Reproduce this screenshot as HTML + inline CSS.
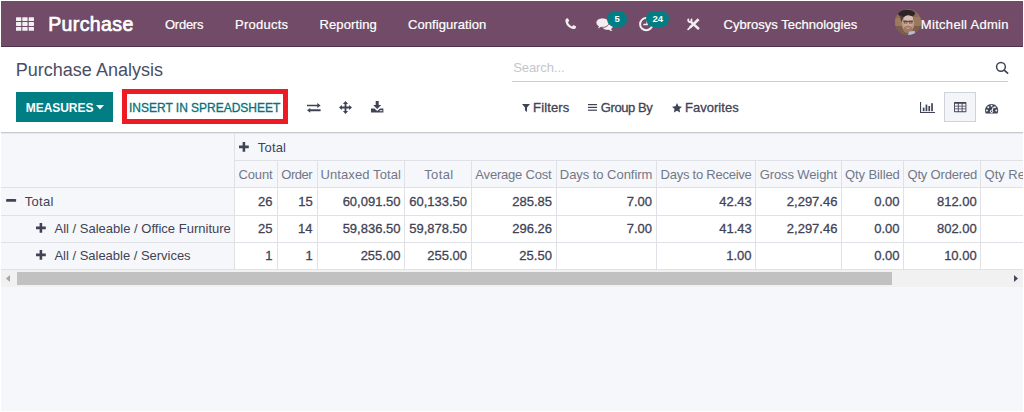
<!DOCTYPE html>
<html lang="en"><head><meta charset="utf-8"><title>Purchase Analysis - Odoo</title>
<style>
html,body{margin:0;padding:0}
body{width:1024px;height:412px;position:relative;overflow:hidden;background:#fff;font-family:"Liberation Sans",sans-serif;font-size:13px}
.a{position:absolute;display:block}
.t{position:absolute;white-space:pre;line-height:24px}
svg{position:absolute;overflow:visible}
.nav{left:1px;top:1px;width:1022px;height:45px;background:#714b67;border-bottom:1px solid #4f3148}
.bg{left:1px;top:133px;width:1022px;height:278px;background:#f6f7fa}
.cpline{left:1px;top:132px;width:1022px;height:1px;background:#c8cad2;box-shadow:0 1px 0 #e7e8ed}
.cells{left:235px;top:188px;width:788px;height:81px;background:#fff}
.hl{height:1px;background:#dfe1e7}
.vl{width:1px;background:#dfe1e7}
.badge{background:#017e84;border-radius:8px}
.btn{left:16px;top:92px;width:97px;height:30px;background:#017e84}
.red{left:122px;top:89px;width:156px;height:25px;border:5px solid #ed1c24}
.sline{left:512px;top:81px;width:496px;height:1px;background:#c9ccd3}
.vbtn{left:944px;top:92px;width:30px;height:28px;border:1px solid #cfd2d9;background:#f4f5f9}
.track{left:1px;top:270px;width:1022px;height:17px;background:#f1f1f2}
.thumb{left:17px;top:272px;width:875px;height:13px;background:#c1c1c1}
.edge{background:#fff}

</style></head>
<body>
<div class="a nav"></div>
<div class="a bg"></div>
<div class="a cpline"></div>
<div class="a cells"></div>
<!-- grid lines -->
<div class="a hl" style="left:234px;top:160px;width:789px"></div>
<div class="a hl" style="left:1px;top:187px;width:1022px"></div>
<div class="a hl" style="left:1px;top:215px;width:1022px"></div>
<div class="a hl" style="left:1px;top:242px;width:1022px"></div>
<div class="a hl" style="left:1px;top:269px;width:1022px"></div>
<div class="a vl" style="left:234px;top:133px;height:137px"></div>
<div class="a vl" style="left:277px;top:161px;height:109px"></div>
<div class="a vl" style="left:317px;top:161px;height:109px"></div>
<div class="a vl" style="left:404px;top:161px;height:109px"></div>
<div class="a vl" style="left:471px;top:161px;height:109px"></div>
<div class="a vl" style="left:556px;top:161px;height:109px"></div>
<div class="a vl" style="left:656px;top:161px;height:109px"></div>
<div class="a vl" style="left:755px;top:161px;height:109px"></div>
<div class="a vl" style="left:841px;top:161px;height:109px"></div>
<div class="a vl" style="left:903px;top:161px;height:109px"></div>
<div class="a vl" style="left:980px;top:161px;height:109px"></div>
<!-- scrollbar -->
<div class="a track"></div>
<div class="a thumb"></div>
<svg style="left:5px;top:274px" width="6" height="9" viewBox="0 0 6 9"><path d="M5 1 L5 8 L1 4.500 Z" fill="#a8a3a6"/></svg>
<svg style="left:1013px;top:274px" width="6" height="9" viewBox="0 0 6 9"><path d="M1 1 L1 8 L5 4.500 Z" fill="#45485a"/></svg>
<!-- control panel -->
<div class="a btn"></div>
<svg style="left:96px;top:105px" width="8" height="5" viewBox="0 0 8 5"><path d="M0 0 H8 L4 4.500 Z" fill="#fff"/></svg>
<div class="a red"></div>
<div class="a sline"></div>
<div class="a vbtn"></div>
<!-- navbar icons -->
<svg style="left:15.600px;top:17.200px" width="18" height="14" viewBox="0 0 18 13.700" fill="#f3eef2">
<rect x="0" y="0" width="5.300" height="3.900" rx=".6"/><rect x="6.300" y="0" width="5.300" height="3.900" rx=".6"/><rect x="12.700" y="0" width="5.300" height="3.900" rx=".6"/>
<rect x="0" y="4.900" width="5.300" height="3.900" rx=".6"/><rect x="6.300" y="4.900" width="5.300" height="3.900" rx=".6"/><rect x="12.700" y="4.900" width="5.300" height="3.900" rx=".6"/>
<rect x="0" y="9.800" width="5.300" height="3.900" rx=".6"/><rect x="6.300" y="9.800" width="5.300" height="3.900" rx=".6"/><rect x="12.700" y="9.800" width="5.300" height="3.900" rx=".6"/>
</svg>
<!-- phone -->
<svg style="left:564.800px;top:18px" width="11.400" height="11.400" viewBox="0 0 12 12"><path d="M2.600 .3 C1.500 .5 .3 1.500 .4 3 C.8 7.600 4.400 11.200 9 11.600 C10.500 11.700 11.500 10.500 11.700 9.400 L11.800 8.900 L8.800 7.500 L7.500 9 C5.500 8.200 3.800 6.500 3 4.500 L4.500 3.200 L3.100 .2 Z" fill="#f3eef2"/></svg>
<!-- comments -->
<svg style="left:596px;top:18px" width="17" height="13.500" viewBox="0 0 17 13.500">
<path d="M11.500 4.200 C14.500 4.200 16.900 5.900 16.900 8 C16.900 9.200 16.100 10.300 14.900 11 C15.200 11.900 15.800 12.600 16.600 13.100 C15.200 13.200 13.900 12.700 12.900 11.700 C12.400 11.800 12 11.800 11.500 11.800 C8.500 11.800 6.100 10.100 6.100 8 C6.100 5.900 8.500 4.200 11.500 4.200 Z" fill="#f3eef2"/>
<path d="M6.500 0 C10.100 0 13 2.100 13 4.700 C13 7.300 10.100 9.400 6.500 9.400 C5.900 9.400 5.400 9.350 4.900 9.250 C3.800 10.300 2.400 10.900 .8 10.900 C1.700 10.300 2.300 9.400 2.500 8.400 C1 7.500 0 6.200 0 4.700 C0 2.100 2.900 0 6.500 0 Z" fill="#f3eef2" stroke="#714b67" stroke-width=".9"/>
</svg>
<div class="a badge" style="left:607px;top:11px;width:20px;height:16px"></div>
<!-- clock -->
<svg style="left:639px;top:17.200px" width="14.400" height="14.400" viewBox="0 0 14.400 14.400"><circle cx="7.200" cy="7.200" r="6.100" fill="none" stroke="#f3eef2" stroke-width="2"/><path d="M8.100 3.300 V7.600 H4.300" fill="none" stroke="#f3eef2" stroke-width="1.500"/></svg>
<div class="a badge" style="left:646px;top:11px;width:23px;height:15.500px"></div>
<!-- tools -->
<svg style="left:686.600px;top:17.800px" width="12.600" height="12" viewBox="0 0 12.600 12" fill="none" stroke="#f3eef2">
<path d="M11.600 1.200 L2.900 9.600" stroke-width="2.600"/>
<path d="M3.400 9.100 L1.100 11.300" stroke-width="1.700" stroke-linecap="round"/>
<path d="M4.500 4.300 L11.300 10.500" stroke-width="2.400" stroke-linecap="round"/>
<path d="M3.950 .95 A1.700 1.700 0 1 1 1.850 .95" stroke-width="1.900"/>
</svg>
<!-- avatar -->
<svg style="left:894.800px;top:8.700px" width="26" height="26" viewBox="0 0 26 26">
<defs><clipPath id="av"><circle cx="13" cy="13" r="13"/></clipPath></defs>
<g clip-path="url(#av)">
<rect width="26" height="26" fill="#8d6c54"/>
<rect x="0" y="9" width="7" height="8" fill="#9c7a5e"/>
<rect x="19" y="8" width="7" height="9" fill="#9a7860"/>
<rect x="0" y="17" width="26" height="9" fill="#7c5e4a"/>
<ellipse cx="11.500" cy="4.600" rx="8.600" ry="3.900" fill="#2e2326"/>
<path d="M5.500 6 C4.800 9 5.800 12 7.300 13.500 L8 7.500 Z" fill="#4a3a38"/>
<ellipse cx="13" cy="14.800" rx="6.200" ry="8.600" fill="#bd9884"/>
<ellipse cx="13.500" cy="9.600" rx="4.600" ry="3.100" fill="#d6beb4"/>
<ellipse cx="13" cy="15.800" rx="4.400" ry="2.300" fill="#caa693"/>
<ellipse cx="13" cy="20.300" rx="4.600" ry="3.500" fill="#a07a66"/>
<path d="M10.500 18.600 Q13 20.400 15.500 18.600 Q13 19.400 10.500 18.600 Z" fill="#e8dcd6"/>
<rect x="8.300" y="11.800" width="9.600" height="1.100" fill="#54444c"/>
<rect x="9.300" y="12" width="2.600" height="2.100" fill="none" stroke="#54444c" stroke-width=".6"/>
<rect x="14.300" y="12" width="2.600" height="2.100" fill="none" stroke="#54444c" stroke-width=".6"/>
<path d="M14 22.800 L19.500 21.800 L20.500 26 L13 26 Z" fill="#b4bed8"/>
</g></svg>
<!-- control panel icons -->
<!-- exchange -->
<svg style="left:306.600px;top:103px" width="13.600" height="10" viewBox="0 0 13.600 10" fill="#3f4356">
<path d="M0 1.700 H10.300 V0 L13.600 2.450 L10.300 4.900 V3.200 H0 Z"/>
<path d="M13.600 6.200 H3.300 V4.900 L0 7.350 L3.300 9.800 V8.200 H13.600 Z"/>
</svg>
<!-- arrows -->
<svg style="left:338.800px;top:100.800px" width="13" height="13" viewBox="0 0 13 13" fill="#3f4356">
<path d="M6.500 0 L9.100 2.900 H7.400 V5.600 H10.100 V3.900 L13 6.500 L10.100 9.100 V7.400 H7.400 V10.100 H9.100 L6.500 13 L3.900 10.100 H5.600 V7.400 H2.900 V9.100 L0 6.500 L2.900 3.900 V5.600 H5.600 V2.900 H3.900 Z"/>
</svg>
<!-- download -->
<svg style="left:370.900px;top:100.800px" width="12.400" height="11.400" viewBox="0 0 12.400 11.400" fill="#3f4356">
<path d="M4.700 0 H7.700 V3.900 H10.200 L6.200 8 L2.200 3.900 H4.700 Z"/>
<path d="M0 7.400 H3.400 L6.200 10 L9 7.400 H12.400 V11.400 H0 Z M8.800 9.100 V10.200 H9.800 V9.100 Z M10.300 9.100 V10.200 H11.300 V9.100 Z" fill-rule="evenodd"/>
</svg>
<!-- filter -->
<svg style="left:521.700px;top:103.700px" width="8" height="8" viewBox="0 0 8 8" fill="#3f4356"><path d="M0 0 H8 L5 3.400 V8 L3 6.400 V3.400 Z"/></svg>
<!-- bars -->
<svg style="left:588.200px;top:104.100px" width="9" height="7" viewBox="0 0 9 7" fill="#3f4356"><rect y="0" width="9" height="1.200"/><rect y="2.800" width="9" height="1.200"/><rect y="5.600" width="9" height="1.200"/></svg>
<!-- star -->
<svg style="left:672px;top:102.600px" width="10" height="9.500" viewBox="0 0 10 9.500" fill="#3f4356"><path d="M5 0 L6.500 3.200 L10 3.650 L7.450 6.050 L8.100 9.500 L5 7.800 L1.900 9.500 L2.550 6.050 L0 3.650 L3.500 3.200 Z"/></svg>
<!-- search -->
<svg style="left:995px;top:61px" width="14" height="14" viewBox="0 0 14 14"><circle cx="5.950" cy="5.800" r="4.400" fill="none" stroke="#3f4356" stroke-width="1.500"/><path d="M9.200 9.100 L12.600 12.200" stroke="#3f4356" stroke-width="1.700" stroke-linecap="round"/></svg>
<!-- bar chart -->
<svg style="left:920px;top:101.800px" width="15" height="11" viewBox="0 0 15 11" fill="#3f4356"><path d="M0 0 H1.100 V9.900 H15 V11 H0 Z"/><rect x="2.800" y="5.600" width="1.700" height="3.600"/><rect x="5.600" y="2.600" width="1.700" height="6.600"/><rect x="8.400" y="4" width="1.700" height="5.200"/><rect x="11.200" y="1.200" width="1.700" height="8"/></svg>
<!-- table -->
<svg style="left:953.700px;top:101.900px" width="12.400" height="10.200" viewBox="0 0 12.400 10.200"><path fill="#3f4356" fill-rule="evenodd" d="M.8 0 H11.6 Q12.4 0 12.4 .8 V9.400 Q12.4 10.2 11.6 10.2 H.8 Q0 10.2 0 9.400 V.8 Q0 0 .8 0 Z M0.90 1.80 V3.65 H3.83 V1.80 Z M4.73 1.80 V3.65 H7.67 V1.80 Z M8.57 1.80 V3.65 H11.50 V1.80 Z M0.90 4.55 V6.45 H3.83 V4.55 Z M4.73 4.55 V6.45 H7.67 V4.55 Z M8.57 4.55 V6.45 H11.50 V4.55 Z M0.90 7.35 V9.30 H3.83 V7.35 Z M4.73 7.35 V9.30 H7.67 V7.35 Z M8.57 7.35 V9.30 H11.50 V7.35 Z"/></svg>
<!-- tachometer -->
<svg style="left:985px;top:103.500px" width="13.200" height="9.400" viewBox="0 0 13.200 9.400"><path fill="#3f4356" d="M6.600 0 C10.300 0 13.200 2.900 13.200 6.500 C13.200 7.600 12.900 8.600 12.500 9.400 H.7 C.3 8.600 0 7.600 0 6.500 C0 2.900 2.900 0 6.600 0 Z"/>
<g fill="#f4f5f9"><circle cx="1.900" cy="6.500" r="1"/><circle cx="3.300" cy="3.200" r="1"/><circle cx="6.600" cy="1.800" r="1"/><circle cx="9.900" cy="3.200" r="1"/><circle cx="11.300" cy="6.500" r="1"/><circle cx="6.600" cy="7.300" r="1.600"/></g>
<path d="M6.600 7.300 L8.300 3.200" stroke="#f4f5f9" stroke-width="1.100" stroke-linecap="round"/><circle cx="6.600" cy="7.300" r=".7" fill="#3f4356"/></svg>
<!-- plus / minus -->
<svg style="left:238.600px;top:141.700px" width="9.800" height="9.800" viewBox="0 0 10 10" fill="#3f4356"><path d="M3.700 0 H6.300 V3.700 H10 V6.300 H6.300 V10 H3.700 V6.300 H0 V3.700 H3.700 Z"/></svg>
<svg style="left:6px;top:199.100px" width="10.200" height="2.800" viewBox="0 0 10 2.800" fill="#3f4356"><rect width="10" height="2.800" rx=".5"/></svg>
<svg style="left:35.900px;top:222.700px" width="9.800" height="9.800" viewBox="0 0 10 10" fill="#3f4356"><path d="M3.700 0 H6.300 V3.700 H10 V6.300 H6.300 V10 H3.700 V6.300 H0 V3.700 H3.700 Z"/></svg>
<svg style="left:35.900px;top:249.800px" width="9.800" height="9.800" viewBox="0 0 10 10" fill="#3f4356"><path d="M3.700 0 H6.300 V3.700 H10 V6.300 H6.300 V10 H3.700 V6.300 H0 V3.700 H3.700 Z"/></svg>

<!-- text -->
<span class="t" style="left:48.23px;top:11.55px;color:#fff;font-size:19.5px;font-weight:400;-webkit-text-stroke:0.7px;letter-spacing:0.385px;">Purchase</span>
<span class="t" style="left:165.04px;top:13.18px;color:#fff;font-size:13px;font-weight:400;-webkit-text-stroke:0.2px;letter-spacing:-0.269px;">Orders</span>
<span class="t" style="left:235.03px;top:13.18px;color:#fff;font-size:13px;font-weight:400;-webkit-text-stroke:0.2px;letter-spacing:0.253px;">Products</span>
<span class="t" style="left:319.43px;top:13.18px;color:#fff;font-size:13px;font-weight:400;-webkit-text-stroke:0.2px;letter-spacing:0.130px;">Reporting</span>
<span class="t" style="left:408.01px;top:13.18px;color:#fff;font-size:13px;font-weight:400;-webkit-text-stroke:0.2px;letter-spacing:0.077px;">Configuration</span>
<span class="t" style="left:723.61px;top:13.18px;color:#fff;font-size:13px;font-weight:400;-webkit-text-stroke:0.2px;letter-spacing:0.009px;">Cybrosys Technologies</span>
<span class="t" style="left:920.83px;top:13.18px;color:#fff;font-size:13px;font-weight:400;-webkit-text-stroke:0.2px;letter-spacing:0.299px;">Mitchell Admin</span>
<span class="t" style="left:614.44px;top:7.11px;color:#fff;font-size:9.5px;font-weight:700;">5</span>
<span class="t" style="left:652.42px;top:7.11px;color:#fff;font-size:9.5px;font-weight:700;">24</span>
<span class="t" style="left:15.79px;top:58.04px;color:#494e64;font-size:18px;font-weight:400;letter-spacing:0.006px;">Purchase Analysis</span>
<span class="t" style="left:25.83px;top:96.05px;color:#fff;font-size:12px;font-weight:700;letter-spacing:-0.061px;">MEASURES</span>
<span class="t" style="left:129.04px;top:95.79px;color:#06727a;font-size:12px;font-weight:400;-webkit-text-stroke:0.3px;letter-spacing:-0.018px;">INSERT IN SPREADSHEET</span>
<span class="t" style="left:513.15px;top:56.22px;color:#c4c6cd;font-size:13px;font-weight:400;letter-spacing:-0.074px;">Search...</span>
<span class="t" style="left:533.09px;top:95.79px;color:#3f4356;font-size:13px;font-weight:400;-webkit-text-stroke:0.3px;letter-spacing:0.124px;">Filters</span>
<span class="t" style="left:600.75px;top:95.79px;color:#3f4356;font-size:13px;font-weight:400;-webkit-text-stroke:0.3px;letter-spacing:-0.403px;">Group By</span>
<span class="t" style="left:684.99px;top:95.79px;color:#3f4356;font-size:13px;font-weight:400;-webkit-text-stroke:0.3px;letter-spacing:0.030px;">Favorites</span>
<span class="t" style="left:257.84px;top:136.22px;color:#3f4356;font-size:13px;font-weight:400;letter-spacing:0.169px;">Total</span>
<span class="t" style="left:238.51px;top:163.22px;color:#727788;font-size:13px;font-weight:400;letter-spacing:-0.152px;">Count</span>
<span class="t" style="left:281.34px;top:163.22px;color:#727788;font-size:13px;font-weight:400;letter-spacing:-0.497px;">Order</span>
<span class="t" style="left:320.49px;top:163.22px;color:#727788;font-size:13px;font-weight:400;letter-spacing:0.103px;">Untaxed Total</span>
<span class="t" style="left:424.14px;top:163.22px;color:#727788;font-size:13px;font-weight:400;letter-spacing:0.419px;">Total</span>
<span class="t" style="left:475.37px;top:163.22px;color:#727788;font-size:13px;font-weight:400;letter-spacing:-0.206px;">Average Cost</span>
<span class="t" style="left:559.79px;top:163.22px;color:#727788;font-size:13px;font-weight:400;letter-spacing:-0.043px;">Days to Confirm</span>
<span class="t" style="left:660.59px;top:163.22px;color:#727788;font-size:13px;font-weight:400;letter-spacing:-0.246px;">Days to Receive</span>
<span class="t" style="left:759.71px;top:163.22px;color:#727788;font-size:13px;font-weight:400;letter-spacing:-0.110px;">Gross Weight</span>
<span class="t" style="left:845.04px;top:163.22px;color:#727788;font-size:13px;font-weight:400;letter-spacing:-0.095px;">Qty Billed</span>
<span class="t" style="left:907.44px;top:163.22px;color:#727788;font-size:13px;font-weight:400;letter-spacing:-0.171px;">Qty Ordered</span>
<span class="t" style="left:984.54px;top:163.22px;color:#727788;font-size:13px;font-weight:400;">Qty Received</span>
<span class="t" style="left:24.74px;top:190.22px;color:#3f4356;font-size:13px;font-weight:400;letter-spacing:0.319px;">Total</span>
<span class="t" style="left:54.47px;top:217.22px;color:#3f4356;font-size:13px;font-weight:400;letter-spacing:0.009px;">All / Saleable / Office Furniture</span>
<span class="t" style="left:54.47px;top:244.22px;color:#3f4356;font-size:13px;font-weight:400;letter-spacing:-0.018px;">All / Saleable / Services</span>
<span class="t" style="left:258.12px;top:189.79px;color:#3f4356;font-size:13px;font-weight:400;-webkit-text-stroke:0.3px;">26</span>
<span class="t" style="left:298.28px;top:189.79px;color:#3f4356;font-size:13px;font-weight:400;-webkit-text-stroke:0.3px;">15</span>
<span class="t" style="left:342.63px;top:189.79px;color:#3f4356;font-size:13px;font-weight:400;-webkit-text-stroke:0.3px;">60,091.50</span>
<span class="t" style="left:409.23px;top:189.79px;color:#3f4356;font-size:13px;font-weight:400;-webkit-text-stroke:0.3px;">60,133.50</span>
<span class="t" style="left:512.19px;top:189.79px;color:#3f4356;font-size:13px;font-weight:400;-webkit-text-stroke:0.3px;">285.85</span>
<span class="t" style="left:626.69px;top:189.79px;color:#3f4356;font-size:13px;font-weight:400;-webkit-text-stroke:0.3px;">7.00</span>
<span class="t" style="left:719.19px;top:189.79px;color:#3f4356;font-size:13px;font-weight:400;-webkit-text-stroke:0.3px;">42.43</span>
<span class="t" style="left:786.82px;top:189.79px;color:#3f4356;font-size:13px;font-weight:400;-webkit-text-stroke:0.3px;">2,297.46</span>
<span class="t" style="left:874.19px;top:189.79px;color:#3f4356;font-size:13px;font-weight:400;-webkit-text-stroke:0.3px;">0.00</span>
<span class="t" style="left:936.93px;top:189.79px;color:#3f4356;font-size:13px;font-weight:400;-webkit-text-stroke:0.3px;">812.00</span>
<span class="t" style="left:258.08px;top:216.79px;color:#3f4356;font-size:13px;font-weight:400;-webkit-text-stroke:0.3px;">25</span>
<span class="t" style="left:298.07px;top:216.79px;color:#3f4356;font-size:13px;font-weight:400;-webkit-text-stroke:0.3px;">14</span>
<span class="t" style="left:342.63px;top:216.79px;color:#3f4356;font-size:13px;font-weight:400;-webkit-text-stroke:0.3px;">59,836.50</span>
<span class="t" style="left:409.23px;top:216.79px;color:#3f4356;font-size:13px;font-weight:400;-webkit-text-stroke:0.3px;">59,878.50</span>
<span class="t" style="left:512.25px;top:216.79px;color:#3f4356;font-size:13px;font-weight:400;-webkit-text-stroke:0.3px;">296.26</span>
<span class="t" style="left:626.69px;top:216.79px;color:#3f4356;font-size:13px;font-weight:400;-webkit-text-stroke:0.3px;">7.00</span>
<span class="t" style="left:719.19px;top:216.79px;color:#3f4356;font-size:13px;font-weight:400;-webkit-text-stroke:0.3px;">41.43</span>
<span class="t" style="left:786.82px;top:216.79px;color:#3f4356;font-size:13px;font-weight:400;-webkit-text-stroke:0.3px;">2,297.46</span>
<span class="t" style="left:874.19px;top:216.79px;color:#3f4356;font-size:13px;font-weight:400;-webkit-text-stroke:0.3px;">0.00</span>
<span class="t" style="left:936.93px;top:216.79px;color:#3f4356;font-size:13px;font-weight:400;-webkit-text-stroke:0.3px;">802.00</span>
<span class="t" style="left:265.22px;top:243.79px;color:#3f4356;font-size:13px;font-weight:400;-webkit-text-stroke:0.3px;">1</span>
<span class="t" style="left:305.42px;top:243.79px;color:#3f4356;font-size:13px;font-weight:400;-webkit-text-stroke:0.3px;">1</span>
<span class="t" style="left:360.63px;top:243.79px;color:#3f4356;font-size:13px;font-weight:400;-webkit-text-stroke:0.3px;">255.00</span>
<span class="t" style="left:427.23px;top:243.79px;color:#3f4356;font-size:13px;font-weight:400;-webkit-text-stroke:0.3px;">255.00</span>
<span class="t" style="left:519.33px;top:243.79px;color:#3f4356;font-size:13px;font-weight:400;-webkit-text-stroke:0.3px;">25.50</span>
<span class="t" style="left:726.29px;top:243.79px;color:#3f4356;font-size:13px;font-weight:400;-webkit-text-stroke:0.3px;">1.00</span>
<span class="t" style="left:874.19px;top:243.79px;color:#3f4356;font-size:13px;font-weight:400;-webkit-text-stroke:0.3px;">0.00</span>
<span class="t" style="left:944.13px;top:243.79px;color:#3f4356;font-size:13px;font-weight:400;-webkit-text-stroke:0.3px;">10.00</span>
<div class="a edge" style="left:1023px;top:0;width:1px;height:412px"></div>
<div class="a edge" style="left:0;top:411px;width:1024px;height:1px"></div>
</body></html>
